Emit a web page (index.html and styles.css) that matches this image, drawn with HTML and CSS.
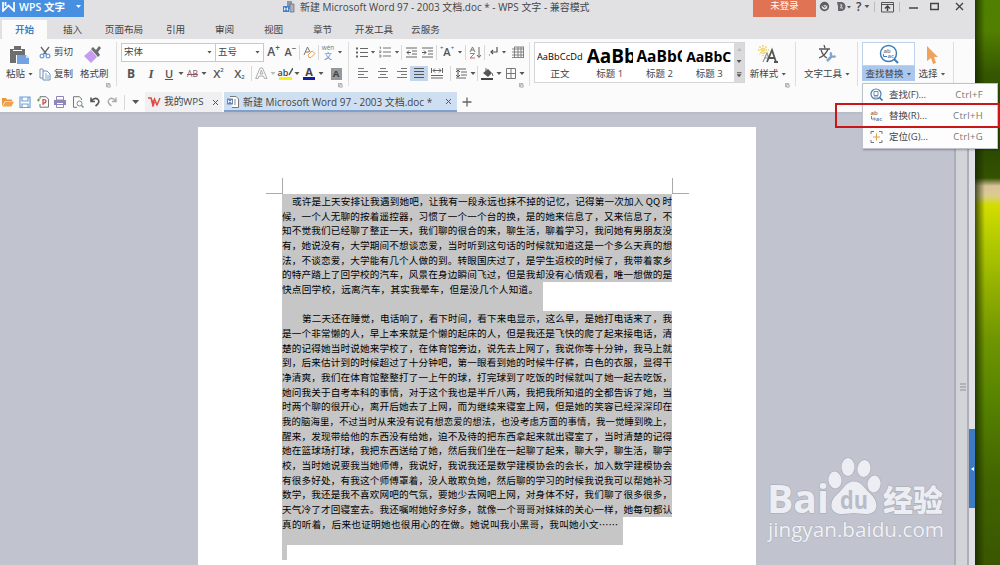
FILE: index.html
```html
<!DOCTYPE html>
<html lang="zh-CN">
<head>
<meta charset="utf-8">
<title>WPS 文字</title>
<link rel="stylesheet" href="styles.css">
</head>
<body>
<div class="desktop">
<div class="window">
  <header class="titlebar">
    <div class="brand">
      <svg width="13" height="10" viewBox="0 0 13 10"><path d="M1 0v9L6.500 3.500 12 9V0M3.500 0v4M9.500 0v0" fill="none" stroke="#fff" stroke-width="1.700"/></svg>
      <span class="brand-name">WPS 文字</span>
      <i class="arrow light"></i>
    </div>
    <div class="doc-title">
      <svg width="12" height="13" viewBox="0 0 12 13"><path d="M4 1h5v8H4z" fill="#8f969e"/><path d="M7 4h4v8H7z" fill="#aab2bb" stroke="#667" stroke-width=".7"/><path d="M0 6h6v6H0z" fill="#3f80c8"/><path d="M1.500 7.500v3M4.500 7.500v3M1.500 9h3" stroke="#fff" stroke-width=".8"/></svg>
      <span>新建 Microsoft Word 97 - 2003 文档.doc * - WPS 文字 - 兼容模式</span>
    </div>
    <div class="login">未登录</div>
    <div class="window-tools">
      <svg class="w11" viewBox="0 0 11 11"><circle cx="5.500" cy="5.500" r="3.800" fill="none" stroke="#5d5d60" stroke-width="1.800"/><path d="M2 4l3.500 3L9 3.500 7 2H3z" fill="#5d5d60"/><path d="M4 4.200l2 1.800 1.500-2z" fill="#e1e1e4"/></svg>
      <svg class="w16" viewBox="0 0 16 11"><path d="M1 1h5q3.500 1 3.500 4.500T6 10H2V5.500z" fill="#66666a"/><path d="M4 4h2l-1.500 3H7" stroke="#ddd" fill="none"/><path d="M11 5h4l-2 2.400z" fill="#555"/></svg>
      <span class="help">?</span><i class="arrow"></i><i class="tsep"></i>
      <svg class="w13" viewBox="0 0 13 12"><path d="M.5 1.500h12v9.500H.5z M.5 3.500h12" fill="none" stroke="#555"/><path d="M6.500 10V5.500M4 7.500l2.500-2.500L9 7.500" fill="none" stroke="#444" stroke-width="1.500"/></svg>
      <i class="tsep"></i>
      <svg class="w9" viewBox="0 0 9 9"><path d="M0 6h9" stroke="#444" stroke-width="1.500"/></svg>
      <svg class="w9" viewBox="0 0 9 9"><path d="M.7 1.500h7.600v6H.7z" fill="none" stroke="#444" stroke-width="1.400"/></svg>
      <svg class="w9" viewBox="0 0 9 9"><path d="M1 1l7 7M8 1L1 8" stroke="#444" stroke-width="1.400"/></svg>
    </div>
  </header>

  <nav class="ribbon-tabs">
    <span class="active">开始</span><span>插入</span><span class="wide">页面布局</span><span>引用</span><span>审阅</span><span>视图</span><span>章节</span><span class="wider">开发工具</span><span>云服务</span>
  </nav>

  <section class="ribbon">
    <div class="group clipboard">
      <div class="paste">
        <svg width="21" height="20" viewBox="0 0 21 20"><path d="M1 3h15v6H7v8H1z" fill="#6d6e70"/><path d="M5 0h7v4H5z" fill="#6d6e70"/><path d="M4 4.500h9" stroke="#fff"/><path d="M8 9h9l3 3v6H8z" fill="#73a2e3"/><path d="M17 9v3h3z" fill="#d4e4f8"/></svg>
        <span class="label">粘贴<i class="arrow"></i></span>
      </div>
      <div class="cutcopy">
        <span class="label"><svg width="12" height="13" viewBox="0 0 12 13"><path d="M2 1l6 8M10 1L4 9" stroke="#666" stroke-width="1.300"/><circle cx="3" cy="10" r="1.900" fill="none" stroke="#6c9fd6" stroke-width="1.200"/><circle cx="9" cy="10" r="1.900" fill="none" stroke="#6c9fd6" stroke-width="1.200"/></svg>剪切</span>
        <span class="label"><svg width="12" height="13" viewBox="0 0 12 13"><path d="M4 3V1H1v9h3" fill="none" stroke="#8296b0"/><path d="M4 3h4l3 3v6H4z" fill="#fff" stroke="#6691bf"/><path d="M6 6h2M6 8h4M6 10h4" stroke="#6691bf" stroke-width=".8"/></svg>复制</span>
      </div>
      <div class="painter">
        <svg width="20" height="19" viewBox="0 0 20 19"><path d="M1 11l7-6 6 7-6 6z" fill="#c69cec"/><path d="M8 4l2-2 3 3 3-4 2 2-3 4 2 3-2 2z" fill="#6d6d70"/></svg>
        <span class="label">格式刷</span>
      </div>
      <svg class="launcher" viewBox="0 0 6 6"><path d="M.5 5V.5H5M2 2h3v3H2z" fill="none" stroke="#888" stroke-width=".8"/></svg>
    </div>

    <div class="group font">
      <div class="row">
        <div class="select family">宋体<i class="arrow"></i></div><div class="select size">五号<i class="arrow"></i></div>
        <b class="cell w19 glyph">A<sup>+</sup></b><b class="cell w15 glyph small">A<sup>−</sup></b><i class="vsep"></i>
        <span class="cell w16"><svg width="13" height="13" viewBox="0 0 13 13"><path d="M1 9l3.500-8L7 6M2.500 6H6" fill="none" stroke="#777"/><path d="M5 9l4-4 3 2.500-4 4H6z" fill="#fff" stroke="#e8a04c"/></svg></span><i class="vsep"></i>
        <span class="cell w16 pinyin"><small>wén</small><em>文</em></span><i class="arrow cell w9"></i>
      </div>
      <div class="row second">
        <b class="cell w20 glyph fmt">B</b><span class="cell w20 glyph italic">I</span><b class="cell w16 glyph under">U</b><i class="cell w8 arrow"></i>
        <span class="cell w15 strike">AB</span><i class="cell w9 arrow"></i><b class="cell w21 glyph xs">X<sup>2</sup></b><b class="cell w21 glyph xs">X<sub>2</sub></b><i class="vsep"></i>
        <span class="cell w17"><svg width="13" height="13" viewBox="0 0 13 13"><path d="M.7 11.500L5 1h2.500L12 11.500H9.500L8.500 9H4l-1 2.500zM5 7h3L6.300 3z" fill="#fff" stroke="#999" stroke-width=".8"/></svg></span><i class="cell w5 arrow faint"></i>
        <span class="cell highlight">ab<svg width="5" height="8" viewBox="0 0 5 8"><path d="M5 0L1 7" stroke="#555" stroke-width="1.500"/></svg></span><i class="cell w5 arrow"></i>
        <b class="cell w18 fontcolor"><span>A</span></b><i class="cell w5 arrow"></i>
        <b class="cell w24 shade"><span>A</span></b>
      </div>
      <svg class="launcher" viewBox="0 0 6 6"><path d="M.5 5V.5H5M2 2h3v3H2z" fill="none" stroke="#888" stroke-width=".8"/></svg>
    </div>

    <div class="group para">
      <div class="row">
        <span class="cell w17"><svg width="12" height="11" viewBox="0 0 12 11"><path d="M0 1.500h2M0 5.500h2M0 9.500h2" stroke="#666" stroke-width="2"/><path d="M4 1.500h8M4 5.500h8M4 9.500h8" stroke="#666" stroke-width="1.200"/></svg></span><i class="cell w6 arrow"></i>
        <span class="cell w18"><svg width="12" height="12" viewBox="0 0 12 12"><path d="M.5 1h1v2M0 5h2v1.500H0M0 9h2v2H0" fill="none" stroke="#777" stroke-width=".8"/><path d="M4 2h8M4 6h8M4 10h8" stroke="#777" stroke-width="1.200"/></svg></span><i class="cell w6 arrow"></i><i class="vsep"></i>
        <span class="cell w17"><svg width="11" height="11" viewBox="0 0 11 11"><path d="M0 1h11M6 4h5M6 7h5M0 10h11" stroke="#666"/><path d="M5 5.500H1M3 3.500l-2 2 2 2" stroke="#555" fill="none"/></svg></span>
        <span class="cell w15"><svg width="11" height="11" viewBox="0 0 11 11"><path d="M0 1h11M6 4h5M6 7h5M0 10h11" stroke="#666"/><path d="M0 5.500h4M2 3.500l2 2-2 2" stroke="#555" fill="none"/></svg></span><i class="vsep"></i>
        <b class="cell w18 glyph small"><sup>+</sup>A<sup>+</sup></b><i class="cell w9 arrow"></i><i class="vsep"></i>
        <span class="cell w16"><svg width="12" height="13" viewBox="0 0 12 13"><path d="M1 6l2.500-5L6 6M2 4h3" stroke="#777" fill="none"/><path d="M1 7.500h4.500L1 12h5" stroke="#c66" fill="none"/><path d="M10 1v10M8 9l2 2.500L12 9" stroke="#666" fill="none"/></svg></span><i class="vsep"></i>
        <span class="cell w14"><svg width="9" height="11" viewBox="0 0 9 11"><path d="M8 0v5H2M4 3L2 5l2 2" fill="none" stroke="#555" stroke-width="1.200"/><path d="M0 7v2" stroke="#666"/></svg></span><i class="cell w8 arrow"></i>
        <span class="cell w20"><svg width="12" height="12" viewBox="0 0 12 12"><path d="M2.500 1v10.500M6 1v10.500M9 1v10.500M0 3h12M0 6h12M0 9h12M11.500 1v10.500M2 1h10M0 11.500h12" fill="none" stroke="#777" stroke-width=".9"/></svg></span>
      </div>
      <div class="row second">
        <span class="cell w20"><svg width="10" height="11" viewBox="0 0 10 11"><path d="M0 .5h6M0 3.500h10M0 6.500h6M0 9.500h10" stroke="#777"/></svg></span>
        <span class="cell w20"><svg width="10" height="11" viewBox="0 0 10 11"><path d="M2 .5h6M0 3.500h10M2 6.500h6M0 9.500h10" stroke="#777"/></svg></span>
        <span class="cell w17"><svg width="10" height="11" viewBox="0 0 10 11"><path d="M4 .5h6M0 3.500h10M4 6.500h6M0 9.500h10" stroke="#777"/></svg></span>
        <span class="cell w18 pressed"><svg width="10" height="11" viewBox="0 0 10 11"><path d="M0 .5h10M0 3.500h10M0 6.500h10M0 9.500h10" stroke="#555"/></svg></span>
        <span class="cell w18"><svg width="12" height="11" viewBox="0 0 12 11"><path d="M.5 0v5M11.500 0v5M2 2.500h8M4 .5l-2 2 2 2M8 .5l2 2-2 2M0 7.500h12M0 10h12" stroke="#666" fill="none"/></svg></span><i class="vsep pushed"></i>
        <span class="cell w18"><svg width="12" height="11" viewBox="0 0 12 11"><path d="M1 1h10M6 4h6M6 7h6M1 10h10" stroke="#666"/><path d="M3 2v7M1 4l2-2 2 2M1 7l2 2 2-2" stroke="#555" fill="none"/></svg></span><i class="cell w7 arrow"></i><i class="vsep"></i>
        <span class="cell w17"><svg width="13" height="12" viewBox="0 0 13 12"><path d="M2 5l5-4 4 4-4 4z" fill="#555"/><path d="M5 0v4M11 5l1 3" stroke="#666"/><path d="M0 11h12" stroke="#444" stroke-width="2"/></svg></span><i class="cell w7 arrow"></i>
        <span class="cell w17"><svg width="10" height="11" viewBox="0 0 10 11"><path d="M.5.5h9v10h-9zM5 .5v10M.5 5.500h9" fill="none" stroke="#777"/></svg></span><i class="cell w6 arrow"></i>
      </div>
      <svg class="launcher" viewBox="0 0 6 6"><path d="M.5 5V.5H5M2 2h3v3H2z" fill="none" stroke="#888" stroke-width=".8"/></svg>
    </div>

    <div class="group styles">
      <div class="gallery">
        <div class="style"><span class="sample s0">AaBbCcDd</span><span>正文</span></div>
        <div class="style"><b class="sample s1">AaBb</b><span>标题 1</span></div>
        <div class="style"><b class="sample s2">AaBbC</b><span>标题 2</span></div>
        <div class="style"><b class="sample s3">AaBbC</b><span>标题 3</span></div>
        <div class="scroller"><i class="arrow up faint"></i><i class="arrow"></i><i class="arrow more"></i></div>
      </div>
      <div class="big newstyle">
        <svg width="21" height="20" viewBox="0 0 21 20"><path d="M5 0v11M0 5h11M1.500 1.500l7 8M8.500 1.500l-7 8" stroke="#efcf55" stroke-width="1.600" stroke-dasharray="1.500 1"/><circle cx="5" cy="5" r="2" fill="#f5dc72"/><path d="M5 17l4-9 2 6M6 13h4" stroke="#999" fill="none" stroke-width="1.200"/><path d="M9 17l5-12 4 12M11 13h6M16 17h4" stroke="#555" fill="none" stroke-width="1.800"/></svg>
        <span class="label">新样式<i class="arrow"></i></span>
      </div>
      <svg class="launcher" viewBox="0 0 6 6"><path d="M.5 5V.5H5M2 2h3v3H2z" fill="none" stroke="#888" stroke-width=".8"/></svg>
    </div>
    <div class="group texttool big">
      <svg width="19" height="18" viewBox="0 0 19 18"><path d="M1 4h11M6 0l1 3M10 4q-2 6-9 9M3 5q2 6 6 8" fill="none" stroke="#555" stroke-width="1.300"/><path d="M9 16l4.500-4.500" stroke="#83a2d4" stroke-width="2.500"/><path d="M13.500 7.500q-1.500 2 0 3.500t4 0" fill="none" stroke="#83a2d4" stroke-width="2.200"/></svg>
      <span class="label">文字工具<i class="arrow"></i></span>
    </div>
    <div class="group edit">
      <div class="big find">
        <div class="find-icon"><svg width="21" height="21" viewBox="0 0 21 21"><circle cx="9.500" cy="9.500" r="8" fill="#fff" stroke="#3e7cb9" stroke-width="1.500"/><path d="M15 15l4 4" stroke="#3e7cb9" stroke-width="2"/><text x="4.500" y="8.500" class="tiny-a">ab</text><text x="8.500" y="14" class="tiny-b">ac</text><path d="M4.500 10v2.500H8" stroke="#3e7cb9" fill="none"/></svg></div>
        <span class="label">查找替换<i class="arrow"></i></span>
      </div>
      <div class="big choose">
        <svg width="13" height="19" viewBox="0 0 13 19"><path d="M1 0l11 11H8l2 6-3 1-2-6-4 3z" fill="#f0a15c"/></svg>
        <span class="label">选择<i class="arrow"></i></span>
      </div>
    </div>
  </section>

  <div class="doc-tabs">
    <div class="quick">
      <svg viewBox="0 0 12 12"><path d="M0 10V2h4l1 1.500h5V5H3z" fill="#eb963c"/><path d="M3.500 5.500H12L9.500 10.500H.5z" fill="#f0a349"/></svg>
      <svg viewBox="0 0 12 12"><path d="M1 1h10v10.500H1zM3 1v4h6V1M3 11V8h6v3" fill="#fff" stroke="#6f9fd9" stroke-width="1.200"/></svg>
      <svg viewBox="0 0 12 12"><path d="M3 3V.7h6l2.500 2.500v8H3V8" fill="none" stroke="#777"/><path d="M6 9V3.500q3.500 0 3 2T6 7" stroke="#c84848" stroke-width="1.200" fill="none"/><path d="M0 4h3M1.500 2.500v3" stroke="#5a9b4a"/></svg>
      <svg viewBox="0 0 12 12"><path d="M2.500.5h7V4h-7zM2.500 7h7v4.500h-7z" fill="#fff" stroke="#8e86bb"/><path d="M0 4h12v5H0z" fill="#8e86bb"/><path d="M3 7.500h6" stroke="#fff"/></svg>
      <svg viewBox="0 0 12 12"><path d="M9.500 4V3L7.500.7H1.500v10.600H5" fill="none" stroke="#777"/><circle cx="7.500" cy="7.500" r="2.500" fill="none" stroke="#6c9c70"/><path d="M9.500 9.500l2 2" stroke="#6c9c70" stroke-width="1.500"/></svg>
      <svg viewBox="0 0 12 12"><path d="M2 1.500v4h4M2.500 5q3-4 6-2 3.500 3-2 7" fill="none" stroke="#555" stroke-width="1.600"/></svg>
      <svg viewBox="0 0 12 12"><path d="M10 1.500v4H6M9.500 5q-3-4-6-2-3.500 3 2 7" fill="none" stroke="#aaa" stroke-width="1.400"/></svg>
      <i class="vsep"></i><i class="arrow bigarrow"></i>
    </div>
    <div class="tab home"><svg width="13" height="10" viewBox="0 0 13 10"><path d="M0 1h3l2 5 1.500-4L9 8l3-7M3 1l2 8 1.500-4" fill="none" stroke="#d94a43" stroke-width="1.400"/></svg><span>我的WPS</span><svg class="close" viewBox="0 0 7 7"><path d="M1 1l5 5M6 1L1 6" stroke="#555"/></svg></div>
    <div class="tab current"><svg width="12" height="12" viewBox="0 0 12 12"><path d="M3 .5h6l2.500 2.500v8.500H5" fill="#fff" stroke="#777"/><path d="M8 3v6" stroke="#888"/><path d="M0 2.500h6v6H0z" fill="#6787b5"/><path d="M1.500 4v3M4.500 4v3M1.500 5.500h3" stroke="#fff" stroke-width=".8"/></svg><span>新建 Microsoft Word 97 - 2003 文档.doc *</span><svg class="close" viewBox="0 0 7 7"><path d="M1 1l5 5M6 1L1 6" stroke="#555"/></svg></div>
    <svg class="plus" viewBox="0 0 10 10"><path d="M5 .5v9M.5 5h9" stroke="#666" stroke-width="1.300"/></svg>
  </div>

  <main class="workspace">
    <article class="page">
      <div class="margins"><i></i><i></i></div>
      <div class="text">
        <div class="block full">
          <p class="indent1">或许是上天安排让我遇到她吧，让我有一段永远也抹不掉的记忆，记得第一次加入 QQ 时</p>
          <p>候，一个人无聊的按着遥控器，习惯了一个一个台的换，是的她来信息了，又来信息了，不</p>
          <p>知不觉我们已经聊了整正一天，我们聊的很合的来，聊生活，聊着学习，我问她有男朋友没</p>
          <p>有，她说没有，大学期间不想谈恋爱，当时听到这句话的时候就知道这是一个多么天真的想</p>
          <p>法，不谈恋爱，大学能有几个人做的到。转眼国庆过了，是学生返校的时候了，我带着家乡</p>
          <p>的特产踏上了回学校的汽车，风景在身边瞬间飞过，但是我却没有心情观看，唯一想做的是</p>
        </div>
        <div class="block tail1"><p>快点回学校，远离汽车，其实我晕车，但是没几个人知道。</p></div>
        <div class="block full">
          <p class="indent2">第二天还在睡觉，电话响了，看下时间，看下来电显示，这么早，是她打电话来了，我</p>
          <p>是一个非常懒的人，早上本来就是个懒的起床的人，但是我还是飞快的爬了起来接电话，清</p>
          <p>楚的记得她当时说她来学校了，在体育馆旁边，说先去上网了，我说你等十分钟，我马上就</p>
          <p>到，后来估计到的时候超过了十分钟吧，第一眼看到她的时候牛仔裤，白色的衣服，显得干</p>
          <p>净清爽，我们在体育馆整整打了一上午的球，打完球到了吃饭的时候就叫了她一起去吃饭，</p>
          <p>她问我关于自考本科的事情，对于这个我也是半斤八两，我把我所知道的全都告诉了她，当</p>
          <p>时两个聊的很开心，离开后她去了上网，而为继续来寝室上网，但是她的笑容已经深深印在</p>
          <p>我的脑海里，不过当时从来没有说有想恋爱的想法，也没考虑方面的事情，我一觉睡到晚上，</p>
          <p>醒来，发现带给他的东西没有给她，迫不及待的把东西拿起来就出寝室了，当时清楚的记得</p>
          <p>她在篮球场打球，我把东西送给了她，然后我们坐在一起聊了起来，聊大学，聊生活，聊学</p>
          <p>校，当时她说要我当她师傅，我说好，我说我还是数学建模协会的会长，加入数学建模协会</p>
          <p>有很多好处，有我这个师傅罩着，没人敢欺负她，然后聊的学习的时候我说我可以帮她补习</p>
          <p>数学，我还是我不喜欢网吧的气氛，要她少去网吧上网，对身体不好，我们聊了很多很多，</p>
          <p>天气冷了才回寝室去。我还嘱咐她好多好多，就像一个哥哥对妹妹的关心一样，她每句都认</p>
        </div>
        <div class="block tail2"><p>真的听着，后来也证明她也很用心的在做。她说叫我小黑哥，我叫她小文……</p></div>
        <div class="block caret"></div>
      </div>
    </article>
    <div class="scrollbar"><svg width="7" height="9" viewBox="0 0 7 9"><path d="M0 1h6M0 4h6M0 7h6" stroke="#8d9098"/></svg></div>
    <aside class="sidepane"><div class="handle"><svg width="3" height="4" viewBox="0 0 3 4"><path d="M3 0v4L0 2z" fill="#fff"/></svg></div></aside>
  </main>
</div>

<div class="menu">
  <div class="item"><svg width="14" height="14" viewBox="0 0 14 14"><circle cx="6" cy="6" r="5" fill="#fff" stroke="#4a80b4" stroke-width="1.200"/><path d="M4 3.500h4v4H4zM4 9h4" fill="none" stroke="#718ba8"/><path d="M9.500 9.500l3 3" stroke="#3e76ad" stroke-width="1.700"/></svg><span>查找(F)...</span><kbd>Ctrl+F</kbd></div>
  <div class="item"><svg width="14" height="14" viewBox="0 0 14 14"><text x="0.500" y="5.500" class="tiny-a">ab</text><text x="5.800" y="12" class="tiny-b">ac</text><path d="M1.500 7v3H5M4 8.500l1.500 1.500L4 11.500" stroke="#4a80b4" fill="none" stroke-width=".9"/></svg><span>替换(R)...</span><kbd>Ctrl+H</kbd></div>
  <div class="item"><svg width="14" height="14" viewBox="0 0 14 14"><path d="M4 1.500H1V4M9 1.500h3V4M4 12.500H1V10M9 12.500h3V10" fill="none" stroke="#72757a"/><path d="M6.500 3.500v7M3 7h7" stroke="#e0a050"/></svg><span>定位(G)...</span><kbd>Ctrl+G</kbd></div>
</div>
<div class="callout"></div>

<svg class="watermark" width="184" height="90" viewBox="0 0 184 90">
  <g class="wm">
    <text x="2" y="57" class="wm-latin" textLength="62" lengthAdjust="spacingAndGlyphs">Bai</text>
    <ellipse cx="70" cy="24" rx="6.500" ry="8.500" transform="rotate(-8 70 24)"/>
    <ellipse cx="83" cy="11" rx="6.500" ry="9"/>
    <ellipse cx="99" cy="12.500" rx="6.500" ry="8.500" transform="rotate(10 99 12.500)"/>
    <ellipse cx="109" cy="28" rx="6.500" ry="8.500" transform="rotate(8 109 28)"/>
    <path d="M89 25.500c8 0 10 7 16 12 10 9 8 20.500-4 20.500-5 0-8-1-12-1s-7 1-12 1c-12 0-14-11.500-5-19.500 7-6 9-13 17-13z"/>
    <text x="118" y="55" class="wm-cjk" textLength="60" lengthAdjust="spacingAndGlyphs">经验</text>
  </g>
  <text x="75" y="53" class="wm-du" textLength="28" lengthAdjust="spacingAndGlyphs">du</text>
  <text x="3" y="81" class="wm-url" textLength="176" lengthAdjust="spacingAndGlyphs">jingyan.baidu.com</text>
</svg>
</div>
</body>
</html>
```
FILE: styles.css
```css
* { box-sizing: border-box; }
body { margin: 0; font: 9.5px/14px "Open Sans", "Noto Sans CJK SC", sans-serif; color: #444; }
i { font-style: normal; }
p { margin: 0; }
svg { display: block; flex: none; }
.desktop { position: relative; width: 1000px; height: 565px; overflow: hidden;
  background: linear-gradient(90deg, rgba(20,35,0,.75) 975px, transparent 985px),
    linear-gradient(#4f8000 0, #527f00 30px, #345600 75px, #2b4a00 150px, #355200 178px, #d8c39c 186px, #dccb8c 196px, #d3dd00 205px, #b4cb00 240px, #91ae00 290px, #6f9500 340px, #578300 400px, #426500 480px, #3a5600 565px); }
.window { width: 975px; height: 565px; display: flex; flex-direction: column; background: #e1e1e4; }

.titlebar { height: 20px; display: flex; flex: none; }
.titlebar > * { flex: none; }
.brand { width: 84px; height: 17px; background: #478fe0; color: #fff; display: flex; align-items: center; padding: 0 3px 4px 2px; font-size: 10.5px; font-weight: 600; }
.brand-name { margin: 0 8px 0 4px; width: 50px; white-space: nowrap; }
.doc-title { display: flex; margin-left: 199px; width: 469px; height: 13px; align-items: center; gap: 5px; font-size: 9.97px; white-space: nowrap; }
.login { width: 63px; height: 17px; margin-left: 1px; background: #df7354; color: #fff; text-align: center; line-height: 12px; }
.window-tools { display: flex; height: 13px; align-items: center; margin-left: 3px; }
.w11 { width: 11px; margin-right: 6px; height: 11px; }
.w16 { width: 16px; height: 11px; margin-right: 4px; }
.w13 { width: 13px; height: 12px; }
.w9 { width: 9px; height: 9px; margin-right: 16px; }
.w9:last-child { margin-right: 0; }
.help { font-weight: 600; font-size: 12px; line-height: 13px; margin-right: 3px; }
.tsep { width: 1px; height: 10px; background: #bbb; margin: 0 6px 0 5px; }
.tsep + .w9 { margin-left: 3px; margin-right: 12px; }

.arrow { display: inline-block; flex: none; width: 5px; height: 3px; background: #555; clip-path: polygon(0 0, 100% 0, 50% 100%); }
.arrow.light { background: #fff; }
.arrow.faint { background: #bbb; }
.arrow.up { transform: rotate(180deg); }
.arrow.bigarrow { width: 7px; height: 4px; }

.ribbon-tabs { height: 19px; display: flex; flex: none; font-size: 9.600px; line-height: 20px; }
.ribbon-tabs span { width: 49px; text-align: center; white-space: nowrap; }
.ribbon-tabs .active { width: 45px; margin: 0 1px 0 2px; background: #fbfbfb; color: #2b6cb5; font-weight: 500; }
.ribbon-tabs .wide { width: 54px; }
.ribbon-tabs .wider { width: 54px; }

.ribbon { height: 53px; display: flex; flex: none; background: #fbfbfb; }
.group { position: relative; display: flex; height: 50px; }
.group::after { content: ""; position: absolute; right: 0; top: 3px; width: 1px; height: 44px; background: #dedee0; }
.launcher { position: absolute; right: 6px; bottom: 1px; width: 5px; height: 5px; }
.label { display: flex; align-items: center; gap: 3px; white-space: nowrap; }
.clipboard { width: 117px; }
.paste { width: 36px; padding: 7px 0 0 6px; }
.paste svg { margin-left: 3px; }
.cutcopy { width: 42px; display: flex; flex-direction: column; gap: 8px; padding: 6px 0 0 3px; }
.painter { padding: 6px 0 0 2px; }
.painter svg { margin: 0 0 3px 3px; }
.paste .label { margin-top: 1px; }

.font { width: 232px; flex-direction: column; padding: 4px 0 0 4px; }
.row { display: flex; height: 18px; align-items: center; }
.row.second { height: 17px; margin-top: 4px; }
.cell { display: flex; flex: none; justify-content: center; align-items: center; white-space: nowrap; }
.vsep { flex: none; width: 1px; height: 15px; background: #d8d8da; margin: 0 1px; }
.vsep.pushed { margin-left: 4px; }
.select { height: 19px; border: 1px solid #c9c9cd; background: #fff; display: flex; align-items: center; justify-content: space-between; padding: 0 3px 0 2px; }
.family { width: 95px; }
.size { width: 48px; border-left: 0; }
.w5.cell { width: 6px; } .w6.cell { width: 6px; } .w7.cell { width: 6px; } .w8.cell, .w9.cell { width: 8px; margin: 0; height: auto; }
.w14 { width: 14px; } .w15 { width: 15px; } .cell.w16 { width: 16px; height: auto; margin: 0; }
.w17 { width: 17px; } .w18 { width: 18px; } .w19 { width: 19px; } .w20 { width: 20px; } .w21 { width: 21px; } .w24 { width: 24px; }
.arrow.cell { height: 3px; clip-path: polygon(.5px 0, 5.5px 0, 3px 3px); }
.arrow.w8.cell, .arrow.w9.cell { height: 3px; clip-path: polygon(1.5px 0, 6.5px 0, 4px 3px); }
.glyph { font-size: 12px; color: #555; font-weight: 600; }
.glyph sup { font-size: 8px; margin-bottom: 8px; line-height: 6px; }
.glyph sub { font-size: 6px; margin-top: 7px; line-height: 6px; }
.glyph.small { font-size: 11px; }
.xs { font-size: 11.5px; }
.xs sup { font-size: 6px; }
.para .glyph sup { font-size: 6px; }
.fmt { font-weight: 700; }
.italic { font-family: "Liberation Serif", serif; font-style: italic; font-size: 13px; }
.under { text-decoration: underline; font-size: 11px; }
.strike { font-size: 8.5px; color: #8a5560; text-decoration: line-through; }
.pinyin { flex-direction: column; color: #777; }
.pinyin small { font-size: 6.5px; line-height: 6px; }
.pinyin em { font-style: normal; font-size: 8px; line-height: 9px; color: #5689c0; }
.highlight { height: 13px; border-bottom: 3px solid #f6f01e; font-size: 9px; font-weight: 600; width: 13px; margin: 0 2px 0 3px; line-height: 9px; }
.fontcolor span { border-bottom: 3px solid #1020a0; width: 12px; height: 13px; line-height: 10px; font-size: 11px; text-align: center; }
.shade span { background: #97989b; width: 11px; height: 12px; line-height: 12px; font-size: 9.5px; text-align: center; }

.para { width: 181px; flex-direction: column; padding: 4px 0 0 4px; }
.pressed { height: 15px; background: #c4d6ec; }

.styles { width: 266px; padding: 3px 0 0 4px; }
.gallery { display: flex; width: 211px; height: 41px; border: 1px solid #d5d5d8; background: #fff; }
.style { width: 50px; padding: 3px 2px 0; display: flex; flex-direction: column; align-items: center; overflow: hidden; }
.sample { color: #000; width: 46px; height: 21px; line-height: 21px; overflow: hidden; white-space: nowrap; font-family: "Open Sans", sans-serif; }
.s0 { font-size: 9.2px; letter-spacing: .1px; }
.s1 { font-size: 19px; }
.s2 { font-size: 15.5px; }
.s3 { font-size: 14px; letter-spacing: -.1px; }
.scroller { width: 10px; margin-left: auto; background: #dadadd; display: flex; flex-direction: column; justify-content: space-around; align-items: center; }
.arrow.more { height: 5px; clip-path: polygon(0 0, 100% 0, 100% 1px, 0 1px, 0 2px, 100% 2px, 50% 100%, 0 2px); }
.big { display: flex; flex-direction: column; align-items: center; }
.newstyle { width: 46px; padding-top: 3px; }
.newstyle svg { margin-bottom: 2px; }
.texttool { width: 62px; padding-top: 6px; }
.texttool svg { margin-bottom: 4px; }
.edit { width: 96px; padding: 3px 0 0 4px; }
.find { width: 53px; height: 39px; background: #aac8ee; }
.find-icon { width: 53px; height: 24px; border: 1px solid #bed2ea; background: #fff; padding: 1px 0 0 16px; }
.find .label { margin-top: 1px; }
.choose { width: 37px; padding: 4px 3px 0 0; }
.choose svg { margin-bottom: 2px; }
.tiny-a, .tiny-b { font: 600 6px "Open Sans", sans-serif; fill: #4e789e; }
.tiny-a { fill: #8a6658; }

.doc-tabs { height: 22px; flex: none; display: flex; background: #fbfbfb; border-bottom: 2px solid #b9bdca; }
.quick { width: 145px; display: flex; align-items: center; padding-left: 2px; gap: 5.400px; }
.quick svg { width: 12px; height: 12px; }
.quick .vsep { margin: 0 2px 0 0; }
.tab { display: flex; align-items: center; gap: 3px; white-space: nowrap; font-size: 9.7px; height: 20px; }
.close { width: 7px; height: 7px; margin-left: auto; }
.home { width: 77px; background: #f0f0f2; padding: 0 3px; margin-right: 2px; }
.current { width: 233px; background: #cfdff2; padding: 1px 5px 0 3px; border-bottom: 2px solid #7f9fcd; gap: 4px; font-size: 9.950px; }
.plus { width: 10px; height: 10px; margin: 5px; }

.workspace { flex: 1; min-height: 0; display: flex; background: #c1c4cf; }
.page { width: 558px; margin: 13px 198px 0 198px; flex: none; background: #fff; }
.margins { height: 67px; display: flex; justify-content: space-between; padding: 51px 67px 0; }
.margins i { width: 17px; height: 16px; border-right: 1px solid #aaa; border-bottom: 1px solid #aaa; margin-left: 1px; }
.margins i + i { border-right: 0; border-left: 1px solid #aaa; }
.text { width: 390px; margin-left: 84px; color: #000; font: 400 9.600px/14.700px "Noto Sans CJK SC", sans-serif; }
.block { background: #c6c6c6; }
.block p { height: 14.700px; white-space: nowrap; text-align: justify; text-align-last: justify; }
.block p:nth-child(8) { font-size: 9.4px; }
.indent1 { padding-left: 10px; }
.indent2 { padding-left: 20px; }
.tail1 { width: 261px; height: 29px; padding-right: 5px; }
.tail2 { width: 341px; height: 28px; padding-right: 5px; }
.caret { width: 5px; height: 15px; }
.scrollbar { width: 15px; flex: none; background: #d2d4d8; border: solid #acafba; border-width: 0 2px; padding: 269px 0 0 4px; }
.sidepane { width: 6px; flex: none; background: #e0e1e4; padding-top: 315px; }
.handle { height: 79px; background: #3e79c4; display: flex; align-items: center; justify-content: center; }

.menu { position: absolute; left: 862px; top: 83px; width: 136px; height: 66px; background: #fdfdfd; border: 1px solid #bfc3ca; box-shadow: 1px 1px 2px rgba(0,0,0,.3); }
.item { display: flex; align-items: center; height: 21.300px; padding: 0 14px 0 7px; }
.item span { margin-left: 5px; }
.item kbd { margin-left: auto; font: inherit; color: #777; letter-spacing: .3px; }
.callout { position: absolute; left: 835px; top: 103px; width: 165px; height: 25px; border: 2px solid #cb1518; }

.watermark { position: absolute; left: 765px; top: 456px; }
.wm { fill: #eceef3; stroke: #aeb1bc; stroke-width: 1.500; paint-order: stroke; }
.wm-latin { font: 700 40px "Open Sans", sans-serif; }
.wm-cjk { font: 900 30px "Noto Sans CJK SC", sans-serif; }
.wm-du { font: 700 25px "Open Sans", sans-serif; fill: #b9bcc8; }
.wm-url { font: 500 20px "Open Sans", sans-serif; fill: #f0f1f5; stroke: #adb0bb; stroke-width: 1; paint-order: stroke; }
```
